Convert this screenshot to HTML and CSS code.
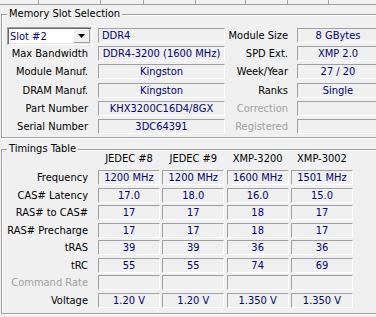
FILE: index.html
```html
<!DOCTYPE html>
<html>
<head>
<meta charset="utf-8">
<link rel="stylesheet" href="styles.css">
</head>
<body>
<div class="tabs"><span></span><span></span><span></span><span></span><span></span><span></span><span></span><span class="last"></span></div>

<section class="group slot">
  <div class="gtitle">Memory Slot Selection</div>
  <div class="slot-grid">
    <div class="combo"><span class="combo-text">Slot #2</span><span class="combo-btn"><svg width="7" height="4" viewBox="0 0 7 4"><polygon points="0,0 7,0 3.5,4" fill="#000"/></svg></span></div>
    <div class="field left">DDR4</div>
    <div class="rlabel">Module Size</div>
    <div class="field">8 GBytes</div>

    <div class="label">Max Bandwidth</div>
    <div class="field">DDR4-3200 (1600 MHz)</div>
    <div class="rlabel">SPD Ext.</div>
    <div class="field">XMP 2.0</div>

    <div class="label">Module Manuf.</div>
    <div class="field">Kingston</div>
    <div class="rlabel">Week/Year</div>
    <div class="field">27 / 20</div>

    <div class="label">DRAM Manuf.</div>
    <div class="field">Kingston</div>
    <div class="rlabel">Ranks</div>
    <div class="field">Single</div>

    <div class="label">Part Number</div>
    <div class="field">KHX3200C16D4/8GX</div>
    <div class="rlabel dim">Correction</div>
    <div class="field"></div>

    <div class="label">Serial Number</div>
    <div class="field">3DC64391</div>
    <div class="rlabel dim">Registered</div>
    <div class="field"></div>
  </div>
</section>

<section class="group timings">
  <div class="gtitle">Timings Table</div>
  <div class="t-grid">
    <div></div>
    <div class="head">JEDEC #8</div>
    <div class="head">JEDEC #9</div>
    <div class="head">XMP-3200</div>
    <div class="head">XMP-3002</div>

    <div class="tlabel">Frequency</div>
    <div class="field">1200 MHz</div>
    <div class="field">1200 MHz</div>
    <div class="field">1600 MHz</div>
    <div class="field">1501 MHz</div>

    <div class="tlabel">CAS# Latency</div>
    <div class="field">17.0</div>
    <div class="field">18.0</div>
    <div class="field">16.0</div>
    <div class="field">15.0</div>

    <div class="tlabel">RAS# to CAS#</div>
    <div class="field">17</div>
    <div class="field">17</div>
    <div class="field">18</div>
    <div class="field">17</div>

    <div class="tlabel">RAS# Precharge</div>
    <div class="field">17</div>
    <div class="field">17</div>
    <div class="field">18</div>
    <div class="field">17</div>

    <div class="tlabel">tRAS</div>
    <div class="field">39</div>
    <div class="field">39</div>
    <div class="field">36</div>
    <div class="field">36</div>

    <div class="tlabel">tRC</div>
    <div class="field">55</div>
    <div class="field">55</div>
    <div class="field">74</div>
    <div class="field">69</div>

    <div class="tlabel dim">Command Rate</div>
    <div class="field"></div>
    <div class="field"></div>
    <div class="field"></div>
    <div class="field"></div>

    <div class="tlabel">Voltage</div>
    <div class="field">1.20 V</div>
    <div class="field">1.20 V</div>
    <div class="field">1.350 V</div>
    <div class="field">1.350 V</div>
  </div>
</section>
</body>
</html>
```

FILE: styles.css
```css
html, body {
  margin: 0;
  padding: 0;
  overflow: hidden;
}

body {
  width: 376px;
  height: 317px;
  background: #f0f0f0;
  color: #000;
  font-family: "DejaVu Sans Condensed", "Liberation Sans", Arial, sans-serif;
  font-size: 11px;
  line-height: 13px;
}

.tabs {
  display: grid;
  grid-template-columns: 39px 62px 43px 52px 50px 42px 41px 1fr;
  height: 4px;
  border-bottom: 1px solid #a0a0a0;
}

.tabs span {
  border-right: 1px solid #a0a0a0;
}

.tabs .last {
  border-right: 0;
}

.group {
  margin-left: 1px;
  width: 390px;
  border: 1px solid #a0a0a0;
  box-shadow: inset 1px 1px 0 #fff, 1px 1px 0 #fff;
}

.slot {
  margin-top: 9px;
  padding-bottom: 3px;
}

.timings {
  margin-top: 11px;
  padding-bottom: 4.8px;
}

.gtitle {
  display: table;
  margin: -8px 0 0 5px;
  padding: 0 2px;
  background: #f0f0f0;
  line-height: 14px;
  white-space: nowrap;
}

.slot-grid {
  display: grid;
  grid-template-columns: 96px 127px 72px 82px;
  grid-auto-rows: 15px;
  row-gap: 3.2px;
  margin-top: 7px;
}

.label,
.rlabel,
.tlabel {
  text-align: right;
  white-space: nowrap;
  line-height: 15px;
}

.label {
  padding-right: 10px;
}

.rlabel {
  padding-right: 9px;
}

.tlabel {
  padding-right: 7.67px;
}

.dim {
  color: #a0a0a0;
}

.field {
  box-sizing: border-box;
  border: 1px solid;
  border-color: #a0a0a0 #fff #fff #a0a0a0;
  color: #000080;
  text-align: center;
  white-space: nowrap;
  overflow: hidden;
  line-height: 13px;
}

.field.left {
  text-align: left;
  padding-left: 3px;
}

.combo {
  box-sizing: border-box;
  width: 85px;
  height: 18px;
  margin: -1px 0 0 5px;
  display: flex;
  align-items: center;
  background: #fff;
  border: 1px solid;
  border-color: #a0a0a0 #fff #fff #a0a0a0;
  box-shadow: inset 1px 1px 0 #696969, inset -1px -1px 0 #e3e3e3;
}

.combo-text {
  padding-left: 2px;
  color: #000080;
  white-space: nowrap;
}

.combo-btn {
  box-sizing: border-box;
  margin-left: auto;
  margin-right: 1px;
  width: 17px;
  height: 14px;
  display: flex;
  align-items: center;
  justify-content: center;
  background: #f0f0f0;
  border: 1px solid;
  border-color: #fff #a0a0a0 #a0a0a0 #fff;
}

.combo-btn svg {
  display: block;
}

.t-grid {
  display: grid;
  grid-template-columns: 93.67px repeat(4, 62px);
  column-gap: 2.33px;
  grid-template-rows: 15.4px;
  grid-auto-rows: 15px;
  row-gap: 2.6px;
  margin-top: -4px;
}

.head {
  text-align: center;
  white-space: nowrap;
  line-height: 13px;
}
```
